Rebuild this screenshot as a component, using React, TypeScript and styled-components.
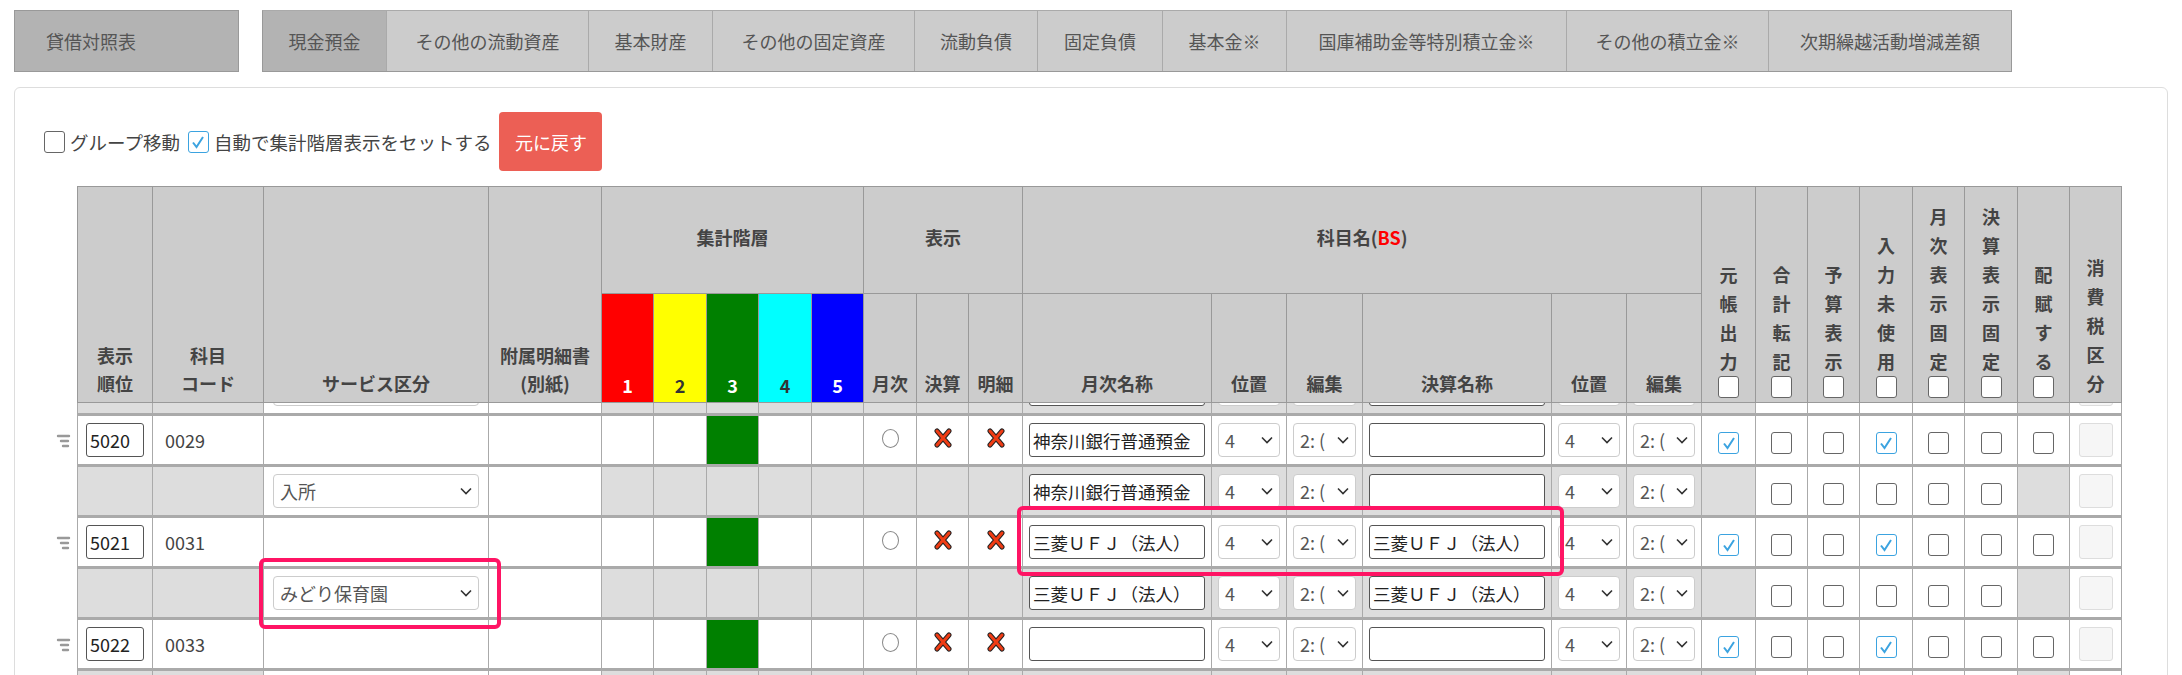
import { useLayoutEffect, useRef } from 'react';
import styled, { createGlobalStyle } from 'styled-components';

const Global = createGlobalStyle`
  body {
    margin: 0;
    font-family: 'Noto Sans CJK JP', 'Noto Sans', sans-serif;
    color: #444;
    background: #fff;
    overflow: hidden;
  }
`;

const COLS = [75, 111, 225, 113, 52, 53, 52, 53, 52, 53, 52, 54, 189, 75, 76, 189, 75, 75, 54, 52, 52, 53, 52, 53, 52, 52];
const LAYER_COLORS = [
  { bg: '#ff0000', fg: '#fff' },
  { bg: '#ffff00', fg: '#333' },
  { bg: '#008000', fg: '#fff' },
  { bg: '#00ffff', fg: '#333' },
  { bg: '#0000ff', fg: '#fff' },
];
const TABS = ['現金預金', 'その他の流動資産', '基本財産', 'その他の固定資産', '流動負債', '固定負債', '基本金※', '国庫補助金等特別積立金※', 'その他の積立金※', '次期繰越活動増減差額'];
const TAB_WIDTHS = [124, 202, 124, 202, 123, 125, 124, 280, 202, 242];
const FLAG_HEADS = ['元帳出力', '合計転記', '予算表示', '入力未使用', '月次表示固定', '決算表示固定', '配賦する'];

const Page = styled.div`
  padding: 10px 14px 0 14px;
`;

const TabBar = styled.div`
  display: flex;
  gap: 23px;
  height: 62px;
`;

const Title = styled.div`
  width: 225px;
  background: #b3b3b3;
  border: 1px solid #999;
  box-sizing: border-box;
  display: flex;
  align-items: center;
  padding-left: 31px;
  font-size: 18px;
  color: #555;
`;

const Tabs = styled.div`
  display: flex;
  border: 1px solid #999;
  border-top-color: #aaa;
`;

const Tab = styled.div<{ $active?: boolean }>`
  display: flex;
  align-items: center;
  justify-content: center;
  box-sizing: border-box;
  background: ${(p) => (p.$active ? '#b3b3b3' : '#ccc')};
  border-right: 1px solid #aaa;
  font-size: 18px;
  color: #555;
  &:last-child { border-right: none; }
`;

const Panel = styled.div`
  margin-top: 15px;
  border: 1px solid #ddd;
  border-radius: 6px;
  height: 620px;
  box-sizing: border-box;
  padding: 24px 0 0 29px;
`;

const Controls = styled.div`
  display: flex;
  align-items: center;
  gap: 6px;
  height: 59px;
  font-size: 18.5px;
  color: #444;
`;

const Label = styled.label`
  display: flex;
  align-items: center;
  gap: 5px;
  margin-right: 2px;
`;

const ResetButton = styled.div`
  width: 103px;
  height: 59px;
  border-radius: 4px;
  background: #ec5f55;
  color: #fff;
  font-size: 18px;
  display: flex;
  align-items: center;
  justify-content: center;
`;

const TableWrap = styled.div`
  margin-top: 15px;
  margin-left: 33px;
`;

const Table = styled.table`
  border-collapse: collapse;
  table-layout: fixed;
  width: 2044px;
`;

const Th = styled.th<{ $bottom?: boolean }>`
  background: #ccc;
  border: 1px solid #999;
  font-size: 18px;
  color: #444;
  font-weight: bold;
  vertical-align: ${(p) => (p.$bottom ? 'bottom' : 'middle')};
  padding: 0 0 4px;
  line-height: 1.55;
  text-align: center;
`;

const LayerTh = styled.th<{ $bg: string; $fg: string }>`
  background: ${(p) => p.$bg};
  color: ${(p) => p.$fg};
  border: 1px solid #999;
  font-size: 18px;
  vertical-align: bottom;
  padding: 0 0 4px;
`;

const Vertical = styled.div`
  display: flex;
  flex-direction: column;
  align-items: center;
  line-height: 29px;
  font-size: 18px;
`;

const Scroll = styled.div`
  height: 280px;
  width: 2094px;
  margin-left: -24px;
  padding-left: 24px;
  box-sizing: border-box;
  overflow-y: scroll;
`;

const Tr = styled.tr<{ $sub?: boolean }>`
  height: 51px;
  border-top: 3px solid #aaa;
  background: ${(p) => (p.$sub ? '#ddd' : '#fff')};
`;

const Td = styled.td<{ $bg?: string }>`
  border-left: 1px solid #aaa;
  border-right: 1px solid #aaa;
  padding: 0 6px;
  font-size: 18px;
  color: #444;
  text-align: center;
  position: relative;
  background: ${(p) => p.$bg ?? 'transparent'};
`;

const CodeTd = styled(Td)`
  text-align: left;
  padding-left: 12px;
`;

const OrderInput = styled.div`
  width: 58px;
  height: 34px;
  box-sizing: border-box;
  border: 1px solid #555;
  border-radius: 3px;
  background: #fff;
  font-size: 18px;
  color: #222;
  display: flex;
  align-items: center;
  padding-left: 3px;
`;

const TextInput = styled.div`
  width: 100%;
  height: 34px;
  box-sizing: border-box;
  border: 1px solid #555;
  border-radius: 3px;
  background: #fff;
  font-size: 17.5px;
  color: #222;
  display: flex;
  align-items: center;
  padding-left: 3px;
  white-space: nowrap;
  overflow: hidden;
`;

const Select = styled.div`
  height: 34px;
  box-sizing: border-box;
  border: 1px solid #ccc;
  border-radius: 4px;
  background: #fff;
  font-size: 18px;
  color: #555;
  display: flex;
  align-items: center;
  justify-content: space-between;
  padding: 0 6px;
  white-space: nowrap;
  overflow: hidden;
`;

const Box = styled.span<{ $checked?: boolean }>`
  display: inline-flex;
  align-items: center;
  justify-content: center;
  width: 21px;
  height: 22px;
  box-sizing: border-box;
  border: 1px solid ${(p) => (p.$checked ? '#3ba3e0' : '#666')};
  border-radius: 3px;
  background: #fff;
  vertical-align: middle;
`;

const Disabled = styled.span`
  display: inline-block;
  width: 34px;
  height: 34px;
  box-sizing: border-box;
  border: 1px solid #ddd;
  border-radius: 3px;
  background: #f6f6f6;
  vertical-align: middle;
`;

const Radio = styled.span`
  display: inline-block;
  width: 15px;
  height: 17px;
  border: 1px solid #888;
  border-radius: 50%;
  background: #fff;
`;

const Handle = styled.svg`
  position: absolute;
  left: -22px;
  top: 17px;
`;

const Highlight = styled.div`
  position: absolute;
  border: 4px solid #ff1464;
  border-radius: 6px;
  pointer-events: none;
`;

const Relative = styled.div`
  position: relative;
`;

function Chevron() {
  return (
    <svg width="12" height="8" viewBox="0 0 12 8">
      <path d="M1 1.5 6 6.5 11 1.5" fill="none" stroke="#333" strokeWidth="1.6" />
    </svg>
  );
}

function Check({ checked }: { checked?: boolean }) {
  return (
    <Box $checked={checked}>
      {checked && (
        <svg width="14" height="14" viewBox="0 0 14 14">
          <path d="M2 7.5 5.5 12 12 2" fill="none" stroke="#3ba3e0" strokeWidth="2" />
        </svg>
      )}
    </Box>
  );
}

function Cross() {
  return (
    <svg width="20" height="20" viewBox="0 0 20 20">
      <path d="M4 3 16 17M16 3 4 17" stroke="#222" strokeWidth="5" strokeLinecap="round" />
      <path d="M4 3 16 17M16 3 4 17" stroke="#f03c14" strokeWidth="3" strokeLinecap="round" />
    </svg>
  );
}

interface Row {
  order: string;
  code: string;
  service: string;
  name: string;
  close: string;
}

const ROWS: Row[] = [
  { order: '5019', code: '0027', service: '入所', name: '', close: '' },
  { order: '5020', code: '0029', service: '入所', name: '神奈川銀行普通預金', close: '' },
  { order: '5021', code: '0031', service: 'みどり保育園', name: '三菱ＵＦＪ（法人）', close: '三菱ＵＦＪ（法人）' },
  { order: '5022', code: '0033', service: '入所', name: '', close: '' },
];

function NameCells({ name, close }: { name: string; close: string }) {
  return (
    <>
      <Td><TextInput>{name}</TextInput></Td>
      <Td><Select>4<Chevron /></Select></Td>
      <Td><Select>2: (<Chevron /></Select></Td>
      <Td><TextInput>{close}</TextInput></Td>
      <Td><Select>4<Chevron /></Select></Td>
      <Td><Select>2: (<Chevron /></Select></Td>
    </>
  );
}

function MainRow({ row }: { row: Row }) {
  return (
    <Tr>
      <Td style={{ paddingLeft: 8 }}>
        <Handle width="16" height="16" viewBox="0 0 16 16">
          <path d="M2 3h11M5 8h7M7 13h5" stroke="#999" strokeWidth="2.4" strokeLinecap="round" />
        </Handle>
        <OrderInput>{row.order}</OrderInput>
      </Td>
      <CodeTd>{row.code}</CodeTd>
      <Td />
      <Td />
      {LAYER_COLORS.map((c, i) => (
        <Td key={i} $bg={i === 2 ? '#008000' : undefined} />
      ))}
      <Td><Radio /></Td>
      <Td><Cross /></Td>
      <Td><Cross /></Td>
      <NameCells name={row.name} close={row.close} />
      <Td><Check checked /></Td>
      <Td><Check /></Td>
      <Td><Check /></Td>
      <Td><Check checked /></Td>
      <Td><Check /></Td>
      <Td><Check /></Td>
      <Td><Check /></Td>
      <Td><Disabled /></Td>
    </Tr>
  );
}

function SubRow({ row }: { row: Row }) {
  return (
    <Tr $sub>
      <Td />
      <Td />
      <Td $bg="#fff" style={{ padding: '0 9px' }}>
        <Select>{row.service}<Chevron /></Select>
      </Td>
      <Td $bg="#fff" />
      {LAYER_COLORS.map((_, i) => <Td key={i} />)}
      <Td />
      <Td />
      <Td />
      <NameCells name={row.name} close={row.close} />
      <Td />
      <Td $bg="#fff"><Check /></Td>
      <Td $bg="#fff"><Check /></Td>
      <Td $bg="#fff"><Check /></Td>
      <Td $bg="#fff"><Check /></Td>
      <Td $bg="#fff"><Check /></Td>
      <Td />
      <Td $bg="#fff"><Disabled /></Td>
    </Tr>
  );
}

function Cols() {
  return (
    <colgroup>
      {COLS.map((w, i) => <col key={i} style={{ width: w }} />)}
    </colgroup>
  );
}

export default function App() {
  const scrollRef = useRef<HTMLDivElement>(null);
  useLayoutEffect(() => {
    if (scrollRef.current) scrollRef.current.scrollTop = 92;
  }, []);

  return (
    <Page>
      <Global />
      <TabBar>
        <Title>貸借対照表</Title>
        <Tabs>
          {TABS.map((t, i) => (
            <Tab key={t} $active={i === 0} style={{ width: TAB_WIDTHS[i] }}>{t}</Tab>
          ))}
        </Tabs>
      </TabBar>
      <Panel>
        <Controls>
          <Label><Check />グループ移動</Label>
          <Label><Check checked />自動で集計階層表示をセットする</Label>
          <ResetButton>元に戻す</ResetButton>
        </Controls>
        <TableWrap>
          <Table>
            <Cols />
            <thead>
              <tr style={{ height: 107 }}>
                <Th rowSpan={2} $bottom>表示<br />順位</Th>
                <Th rowSpan={2} $bottom>科目<br />コード</Th>
                <Th rowSpan={2} $bottom>サービス区分</Th>
                <Th rowSpan={2} $bottom>附属明細書<br />(別紙)</Th>
                <Th colSpan={5}>集計階層</Th>
                <Th colSpan={3}>表示</Th>
                <Th colSpan={6}>科目名(<span style={{ color: '#f00' }}>BS</span>)</Th>
                {FLAG_HEADS.map((h) => (
                  <Th key={h} rowSpan={2} $bottom>
                    <Vertical>
                      {h.split('').map((c, i) => <span key={i}>{c}</span>)}
                      <Check />
                    </Vertical>
                  </Th>
                ))}
                <Th rowSpan={2} $bottom>
                  <Vertical>
                    {'消費税区分'.split('').map((c, i) => <span key={i}>{c}</span>)}
                  </Vertical>
                </Th>
              </tr>
              <tr style={{ height: 109 }}>
                {LAYER_COLORS.map((c, i) => (
                  <LayerTh key={i} $bg={c.bg} $fg={c.fg}>{i + 1}</LayerTh>
                ))}
                <Th $bottom>月次</Th>
                <Th $bottom>決算</Th>
                <Th $bottom>明細</Th>
                <Th $bottom>月次名称</Th>
                <Th $bottom>位置</Th>
                <Th $bottom>編集</Th>
                <Th $bottom>決算名称</Th>
                <Th $bottom>位置</Th>
                <Th $bottom>編集</Th>
              </tr>
            </thead>
          </Table>
          <Relative>
            <Scroll ref={scrollRef}>
              <Table>
                <Cols />
                <tbody>
                  <MainRow row={ROWS[0]} />
                  <SubRow row={ROWS[0]} />
                  {ROWS.slice(1).map((r) => [
                    <MainRow key={r.order} row={r} />,
                    <SubRow key={r.order + 's'} row={r} />,
                  ])}
                </tbody>
              </Table>
            </Scroll>
            <Highlight style={{ left: 940, top: 103, width: 539, height: 62 }} />
            <Highlight style={{ left: 182, top: 155, width: 234, height: 63 }} />
          </Relative>
        </TableWrap>
      </Panel>
    </Page>
  );
}
